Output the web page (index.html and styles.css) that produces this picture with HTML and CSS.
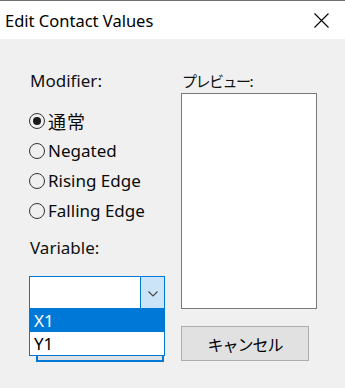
FILE: index.html
```html
<!DOCTYPE html>
<html lang="ja">
<head>
<meta charset="utf-8">
<title>Edit Contact Values</title>
<link rel="stylesheet" href="styles.css">
</head>
<body>
<div class="window">
  <div class="titlebar">
    <span class="title">Edit Contact Values</span>
    <svg class="close" width="15" height="15" viewBox="0 0 15 15"><path d="M0.5 0.5 L14.5 14.5 M14.5 0.5 L0.5 14.5" stroke="#000" stroke-width="1.1" fill="none"/></svg>
  </div>
  <div class="content">
    <div class="col left">
      <div class="label">Modifier:</div>
      <div class="radios">
        <div class="radio"><span class="dot checked"></span><span class="rtext cjk">通常</span></div>
        <div class="radio"><span class="dot"></span><span class="rtext">Negated</span></div>
        <div class="radio"><span class="dot"></span><span class="rtext">Rising Edge</span></div>
        <div class="radio"><span class="dot"></span><span class="rtext">Falling Edge</span></div>
      </div>
      <div class="label var">Variable:</div>
      <div class="combo">
        <div class="field"></div>
        <div class="arrow"><svg width="10" height="6" viewBox="0 0 10 6"><path d="M0.5 0.5 L5 5 L9.5 0.5" stroke="#444" stroke-width="1.1" fill="none"/></svg></div>
        <div class="list">
          <div class="item sel">X1</div>
          <div class="item">Y1</div>
        </div>
      </div>
      <div class="btn ok">OK</div>
    </div>
    <div class="col right">
      <div class="label cjk plabel">プレビュー:</div>
      <div class="preview"></div>
      <div class="btn cancel cjk">キャンセル</div>
    </div>
  </div>
</div>
</body>
</html>
```

FILE: styles.css
```css
html, body {
  margin: 0;
  padding: 0;
  background: #f0f0f0;
}
body {
  font-family: "Noto Sans", "Noto Sans CJK JP", sans-serif;
  color: #000;
}
.cjk {
  font-family: "Noto Sans CJK JP", "Noto Sans", sans-serif;
}
.window {
  width: 345px;
  height: 388px;
  background: #f0f0f0;
  overflow: hidden;
}
.titlebar {
  height: 38px;
  border-top: 1px solid #6f6f6f;
  background: #fff;
  display: flex;
  align-items: center;
  justify-content: space-between;
  padding: 0 16px 0 5px;
}
.title {
  font-size: 16.5px;
  line-height: 20px;
  margin-top: 2px;
}
.close {
  display: block;
  margin-top: 1px;
}
.content {
  display: flex;
  padding-left: 29px;
  gap: 16px;
}
.col {
  display: flex;
  flex-direction: column;
  width: 136px;
}
.label {
  font-size: 17px;
  line-height: 22px;
  color: #111;
}
.left .label:first-child {
  margin-top: 31px;
  padding-left: 1px;
}
.radios {
  margin-top: 14px;
  display: flex;
  flex-direction: column;
}
.radio {
  height: 30px;
  display: flex;
  align-items: center;
  gap: 3px;
}
.dot {
  width: 14px;
  height: 14px;
  border: 1.5px solid #333;
  border-radius: 50%;
  position: relative;
  flex: none;
}
.dot.checked::after {
  content: "";
  position: absolute;
  left: 3px;
  top: 3px;
  width: 8px;
  height: 8px;
  border-radius: 50%;
  background: #1a1a1a;
}
.rtext {
  font-size: 17px;
  line-height: 22px;
  color: #0a0a0a;
}
.rtext.cjk {
  font-size: 18px;
  letter-spacing: 1px;
}
.label.var {
  margin-top: 11px;
  padding-left: 1px;
}
.combo {
  margin-top: 17px;
  height: 33px;
  box-sizing: border-box;
  border: 1px solid #0078d7;
  background: #fff;
  display: flex;
  position: relative;
}
.field {
  flex: 1;
}
.arrow {
  width: 23px;
  background: #cce4f7;
  border-left: 1px solid #0078d7;
  display: flex;
  align-items: center;
  justify-content: center;
}
.arrow svg {
  display: block;
  margin-top: 2px;
}
.list {
  position: absolute;
  left: -1px;
  right: -1px;
  top: 32px;
  border: 1px solid #0078d7;
  border-top: none;
  background: #fff;
  z-index: 2;
}
.item {
  height: 23px;
  line-height: 23px;
  font-size: 17px;
  padding-left: 4px;
}
.item.sel {
  background: #0078d7;
  color: #fff;
}
.btn {
  height: 35px;
  box-sizing: border-box;
  width: 128px;
  background: #e1e1e1;
  border: 1px solid #adadad;
  display: flex;
  align-items: center;
  justify-content: center;
  font-size: 16px;
}
.btn.ok {
  margin-top: 18px;
  margin-left: 7px;
  border: 2px solid #0078d7;
}
.right .plabel {
  margin-top: 31px;
  padding-left: 1px;
  font-size: 15px;
  letter-spacing: -1.5px;
  line-height: 22px;
}
.preview {
  margin-top: 1px;
  height: 216px;
  box-sizing: border-box;
  background: #fff;
  border: 1px solid #7a7a7a;
}
.btn.cancel {
  margin-top: 17px;
  letter-spacing: -1px;
}
```
